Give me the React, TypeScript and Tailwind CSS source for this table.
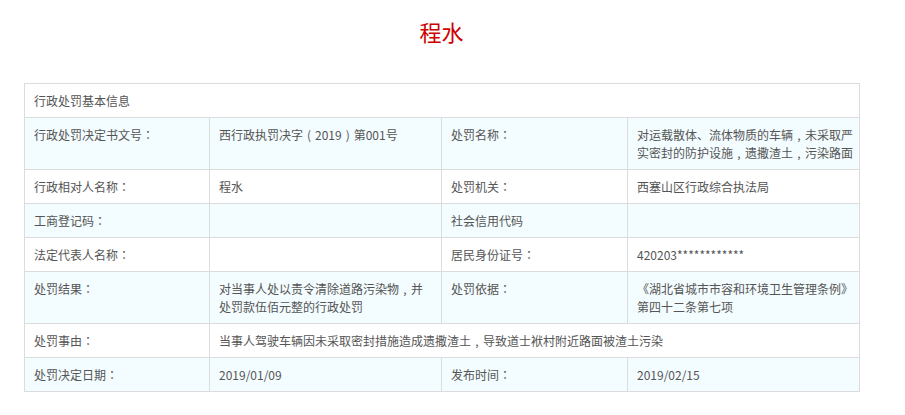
const font = { fontFamily: '"Noto Sans CJK SC", "Noto Sans", sans-serif' };
const tc = { fontFamily: '"Noto Sans CJK TC", sans-serif' };

const halfWidth: Record<string, string> = { '（': '(', '）': ')', '，': ',' };

// centred full-width punctuation, as in the original page
function punct(s: string) {
  return s.split(/([：，（）])/).map((part, i) => {
    if (halfWidth[part])
      return (
        <span key={i} className="inline-block w-[12px] text-center">
          {halfWidth[part]}
        </span>
      );
    if (part === '：')
      return (
        <span key={i} style={tc}>
          {part}
        </span>
      );
    return part;
  });
}

type Cell = { lines: string[]; span?: number };
type Row = { cells: Cell[]; tint: boolean };

const rows: Row[] = [
  {
    tint: true,
    cells: [
      { lines: ['行政处罚决定书文号：'] },
      { lines: ['西行政执罚决字（2019）第001号'] },
      { lines: ['处罚名称：'] },
      { lines: ['对运载散体、流体物质的车辆，未采取严', '实密封的防护设施，遗撒渣土，污染路面'] },
    ],
  },
  {
    tint: false,
    cells: [{ lines: ['行政相对人名称：'] }, { lines: ['程水'] }, { lines: ['处罚机关：'] }, { lines: ['西塞山区行政综合执法局'] }],
  },
  {
    tint: true,
    cells: [{ lines: ['工商登记码：'] }, { lines: [] }, { lines: ['社会信用代码'] }, { lines: [] }],
  },
  {
    tint: false,
    cells: [{ lines: ['法定代表人名称：'] }, { lines: [] }, { lines: ['居民身份证号：'] }, { lines: ['420203************'] }],
  },
  {
    tint: true,
    cells: [
      { lines: ['处罚结果：'] },
      { lines: ['对当事人处以责令清除道路污染物，并', '处罚款伍佰元整的行政处罚'] },
      { lines: ['处罚依据：'] },
      { lines: ['《湖北省城市市容和环境卫生管理条例》', '第四十二条第七项'] },
    ],
  },
  {
    tint: false,
    cells: [
      { lines: ['处罚事由：'] },
      { lines: ['当事人驾驶车辆因未采取密封措施造成遗撒渣土，导致道士袱村附近路面被渣土污染'], span: 3 },
    ],
  },
  {
    tint: true,
    cells: [{ lines: ['处罚决定日期：'] }, { lines: ['2019/01/09'] }, { lines: ['发布时间：'] }, { lines: ['2019/02/15'] }],
  },
];

export default function App() {
  return (
    <div className="min-h-[415px] bg-white text-[12px] text-[#555]" style={font}>
      <div className="ml-6 w-[835px]">
        <h1 className="h-[83px] pt-[16px] text-center text-[22px] leading-[30px] text-[#cc0000]">程水</h1>
        <table className="w-full table-fixed border-collapse border border-[#dcdcdc]">
          <colgroup>
            <col className="w-[185px]" />
            <col className="w-[232px]" />
            <col className="w-[186px]" />
            <col className="w-[232px]" />
          </colgroup>
          <tbody>
            <tr>
              <td colSpan={4} className="border border-[#dcdcdc] px-[9px] pt-2 pb-[7px] leading-[18px]">
                行政处罚基本信息
              </td>
            </tr>
            {rows.map((row, i) => (
              <tr key={i} className={row.tint ? 'bg-[#f3fcfe]' : 'bg-white'}>
                {row.cells.map((c, j) => (
                  <td
                    key={j}
                    colSpan={c.span}
                    className="border border-[#dcdcdc] pl-[9px] pr-1 pt-2 pb-[7px] align-top leading-[18px] whitespace-nowrap"
                  >
                    {c.lines.map((l, k) => (
                      <div key={k}>{punct(l)}</div>
                    ))}
                  </td>
                ))}
              </tr>
            ))}
          </tbody>
        </table>
      </div>
    </div>
  );
}
